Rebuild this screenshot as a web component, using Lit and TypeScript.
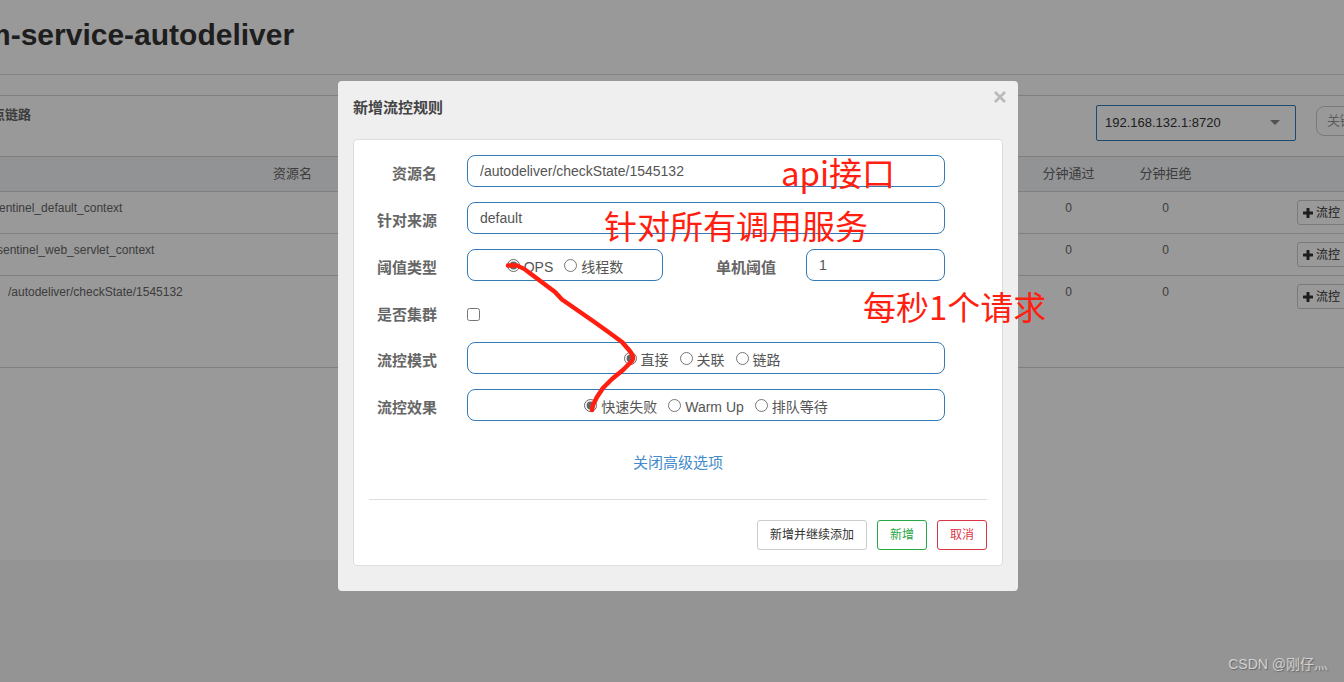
import { LitElement, html, css, svg } from "lit";
import { customElement } from "lit/decorators.js";

const NODES = [
  { name: "sentinel_default_context", level: 0, passed: 0, blocked: 0 },
  { name: "sentinel_web_servlet_context", level: 1, passed: 0, blocked: 0 },
  { name: "/autodeliver/checkState/1545132", level: 2, passed: 0, blocked: 0 },
];

const plusIcon = svg`<svg class="plus" viewBox="0 0 10 10" aria-hidden="true"><path d="M4 0h2q.5 0 .5.5v3h3q.5 0 .5.5v2q0 .5-.5.5h-3v3q0 .5-.5.5H4q-.5 0-.5-.5v-3h-3Q0 6.500 0 6V4q0-.5.5-.5h3v-3Q3.500 0 4 0z" fill="#333"/></svg>`;

/** Monitoring page that lies behind the dialog. */
@customElement("cluster-page")
class ClusterPage extends LitElement {
  static styles = css`
    :host {
      display: block;
      overflow: hidden;
      min-height: 100vh;
      background: #f7f7f7;
      color: #666;
    }
    .bleed {
      margin: 0 -111px 0 -48px;
      padding-bottom: 192px;
      background: #fff;
    }
    h1 {
      margin: 0;
      padding: 18px 32px 22px;
      font-size: 30px;
      line-height: 34px;
      color: #333;
      border-bottom: 1px solid #ddd;
    }
    .card {
      margin-top: 20px;
      padding-bottom: 58px;
      border: 1px solid #d4d4d4;
    }
    .toolbar {
      display: flex;
      align-items: flex-start;
      justify-content: space-between;
      padding: 9px 18px 15px 26px;
    }
    .title {
      font-size: 13px;
      line-height: 20px;
      font-weight: bold;
    }
    .filters {
      display: flex;
      align-items: flex-start;
      gap: 20px;
    }
    .machine {
      position: relative;
    }
    select {
      appearance: none;
      box-sizing: border-box;
      display: block;
      width: 200px;
      height: 36px;
      padding: 0 8px 2px;
      border: 1px solid #337ab7;
      border-radius: 2px;
      background: #fff;
      color: #333;
      font: inherit;
      font-size: 13px;
    }
    .arrow {
      position: absolute;
      right: 16px;
      top: 15px;
      width: 10px;
      height: 5px;
    }
    .keyword {
      box-sizing: border-box;
      width: 120px;
      height: 30px;
      margin-top: 1px;
      padding: 0 10px 2px;
      border: 1px solid #ccc;
      border-radius: 8px;
      background: #fff;
      font: inherit;
      font-size: 13px;
    }
    .keyword::placeholder {
      color: #999;
    }
    table {
      width: 100%;
      table-layout: fixed;
      border-collapse: collapse;
      font-size: 12px;
      line-height: 16px;
    }
    th {
      height: 34px;
      padding: 0;
      border-top: 1px solid #d4d4d4;
      background: #f3f5f7;
      font-size: 13px;
      font-weight: normal;
    }
    td {
      height: 25px;
      padding: 8px 0;
      border-top: 1px solid #d4d4d4;
      text-align: center;
      vertical-align: top;
    }
    tbody tr:last-child td {
      padding-bottom: 0;
    }
    .metric {
      width: 97px;
    }
    .actions {
      width: 240px;
    }
    .name {
      text-align: left;
    }
    .level0 {
      padding-left: 40px;
    }
    .level1 {
      padding-left: 44px;
    }
    .level2 {
      padding-left: 55px;
    }
    .action {
      padding-left: 83px;
      text-align: left;
    }
    .action button {
      display: flex;
      align-items: center;
      gap: 3px;
      height: 25px;
      padding: 0 5px;
      border: 1px solid #ccc;
      border-radius: 3px;
      background: #fff;
      color: #333;
      font: inherit;
    }
    .plus {
      width: 10px;
      height: 10px;
    }
  `;

  render() {
    return html`
      <div class="bleed">
        <h1>m-service-autodeliver</h1>
        <section class="card">
          <div class="toolbar">
            <span class="title">簇点链路</span>
            <div class="filters">
              <div class="machine">
                <select aria-label="IP"><option>192.168.132.1:8720</option></select>
                <svg class="arrow" viewBox="0 0 10 5" aria-hidden="true"><path d="M0 0h10L5 5z" fill="#888" /></svg>
              </div>
              <input class="keyword" type="text" placeholder="关键字" aria-label="关键字" />
            </div>
          </div>
          <table>
            <thead>
              <tr>
                <th>资源名</th>
                <th class="metric"></th>
                <th class="metric"></th>
                <th class="metric"></th>
                <th class="metric"></th>
                <th class="metric">分钟通过</th>
                <th class="metric">分钟拒绝</th>
                <th class="actions"></th>
              </tr>
            </thead>
            <tbody>
              ${NODES.map(
                (n) => html`<tr>
                  <td class="name level${n.level}">${n.name}</td>
                  <td></td>
                  <td></td>
                  <td></td>
                  <td></td>
                  <td>${n.passed}</td>
                  <td>${n.blocked}</td>
                  <td class="action"><button type="button">${plusIcon}流控</button></td>
                </tr>`
              )}
            </tbody>
          </table>
        </section>
      </div>
    `;
  }
}

/** Dialog for a new flow rule. */
@customElement("rule-dialog")
class RuleDialog extends LitElement {
  static styles = css`
    :host {
      display: block;
      box-sizing: border-box;
      width: 680px;
      padding: 15px 15px 25px;
      border-radius: 4px;
      background: #efefef;
      color: #555;
      font-size: 14px;
    }
    header {
      display: flex;
      align-items: flex-start;
      justify-content: space-between;
      padding-bottom: 19px;
    }
    h2 {
      margin: 0;
      font-size: 15px;
      line-height: 24px;
      color: #444;
    }
    .close {
      display: flex;
      margin: -6px -4px 0 0;
      padding: 0;
      border: 0;
      background: none;
    }
    .close svg {
      width: 14px;
      height: 14px;
    }
    .panel {
      padding: 15px;
      border: 1px solid #ddd;
      border-radius: 4px;
      background: #fff;
    }
    .form {
      display: grid;
      grid-template-columns: 68px 196fr 83px 139fr;
      gap: 15px 30px;
      padding-right: 42px;
    }
    .label {
      font-size: 15px;
      line-height: 22px;
      padding-top: 8px;
      font-weight: bold;
      color: #666;
      text-align: right;
    }
    .wide {
      grid-column: 2 / -1;
    }
    .box {
      box-sizing: border-box;
      width: 100%;
      min-width: 0;
      height: 32px;
      margin: 0;
      padding: 0 12px;
      border: 1px solid #337ab7;
      border-radius: 8px;
      background: #fff;
      color: #555;
      font: inherit;
    }
    .choices {
      display: flex;
      align-items: center;
      justify-content: center;
      gap: 11px;
    }
    .choices.spaced {
      padding-right: 20px;
    }
    .choices label {
      display: flex;
      align-items: flex-start;
      gap: 4px;
      line-height: 20px;
      padding-top: 4px;
    }
    input[type="radio"] {
      width: 13px;
      height: 13px;
      margin: 2px 0 0;
      accent-color: #666;
    }
    input[type="checkbox"] {
      width: 13px;
      height: 13px;
      margin: 12px 0 6px;
      justify-self: start;
    }
    .more {
      display: block;
      margin-top: 31px;
      font-size: 15px;
      line-height: 22px;
      text-align: center;
      color: #428bca;
      text-decoration: none;
    }
    footer {
      display: flex;
      justify-content: flex-end;
      gap: 10px;
      margin-top: 25px;
      padding-top: 20px;
      border-top: 1px solid #ddd;
    }
    footer button {
      height: 30px;
      padding: 0 12px 3px;
      border: 1px solid #ccc;
      border-radius: 3px;
      background: #fff;
      color: #333;
      font: inherit;
      font-size: 12px;
    }
    footer .ok {
      border-color: #28a745;
      color: #28a745;
    }
    footer .cancel {
      border-color: #dc3545;
      color: #dc3545;
    }
  `;

  private choices(group: string, labels: string[]) {
    return labels.map(
      (text, i) => html`<label><input type="radio" name=${group} .checked=${i === 0} />${text}</label>`
    );
  }

  render() {
    return html`
      <header>
        <h2>新增流控规则</h2>
        <button class="close" type="button" aria-label="关闭">
          <svg viewBox="0 0 14 14" aria-hidden="true"><path d="M2 2l10 10M12 2l-10 10" stroke="#b9b9b9" stroke-width="2.600" /></svg>
        </button>
      </header>
      <form class="panel" @submit=${(e: Event) => e.preventDefault()}>
        <div class="form">
          <label class="label" for="resource">资源名</label>
          <input class="box wide" id="resource" type="text" value="/autodeliver/checkState/1545132" />
          <label class="label" for="origin">针对来源</label>
          <input class="box wide" id="origin" type="text" value="default" />
          <span class="label" id="grade">阈值类型</span>
          <div class="box choices" role="radiogroup" aria-labelledby="grade">${this.choices("grade", ["QPS", "线程数"])}</div>
          <label class="label" for="count">单机阈值</label>
          <input class="box" id="count" type="text" value="1" />
          <label class="label" for="cluster">是否集群</label>
          <input class="wide" id="cluster" type="checkbox" />
          <span class="label" id="mode">流控模式</span>
          <div class="box wide choices spaced" role="radiogroup" aria-labelledby="mode">${this.choices("mode", ["直接", "关联", "链路"])}</div>
          <span class="label" id="effect">流控效果</span>
          <div class="box wide choices" role="radiogroup" aria-labelledby="effect">${this.choices("effect", ["快速失败", "Warm Up", "排队等待"])}</div>
        </div>
        <a class="more" href="#">关闭高级选项</a>
        <footer>
          <button type="button">新增并继续添加</button>
          <button class="ok" type="submit">新增</button>
          <button class="cancel" type="button">取消</button>
        </footer>
      </form>
    `;
  }
}

@customElement("app-root")
class AppRoot extends LitElement {
  static styles = css`
    :host {
      display: block;
      position: relative;
      overflow: hidden;
      font-family: "Liberation Sans", "Noto Sans CJK SC", sans-serif;
    }
    .overlay {
      position: absolute;
      inset: 0;
      display: flex;
      align-items: flex-start;
      justify-content: center;
      padding: 81px 0 0 12px;
      background: rgba(0, 0, 0, 0.4);
    }
    .sheet {
      position: relative;
    }
    .note {
      position: absolute;
      color: #ff1e10;
      font-family: "Noto Sans CJK SC", sans-serif;
      font-size: 33px;
      line-height: 40px;
      white-space: nowrap;
    }
    .note.api {
      left: 443px;
      top: 71px;
    }
    .note.origin {
      left: 266px;
      top: 124px;
    }
    .note.rate {
      left: 525px;
      top: 205px;
    }
    .stroke {
      position: absolute;
      left: 160px;
      top: 170px;
      width: 150px;
      height: 170px;
      pointer-events: none;
    }
    .watermark {
      position: absolute;
      right: 16px;
      bottom: 8px;
      font-size: 14px;
      line-height: 20px;
      color: #d2d2d2;
      text-shadow: 1px 1px 1px #666;
    }
  `;

  render() {
    return html`
      <cluster-page></cluster-page>
      <div class="overlay">
        <div class="sheet">
          <rule-dialog></rule-dialog>
          <svg class="stroke" viewBox="498 251 150 170" aria-hidden="true">
            <path
              d="M508 265.500H517Q524 268 531 274L555 292L562 299.500L593 321L607 331L622 342L629 350Q635 357 632 361L623 370L612 379L603 388L597 397L593 405L592 410"
              fill="none" stroke="#ff1e10" stroke-width="4.500" stroke-linecap="round" stroke-linejoin="round" />
          </svg>
          <span class="note api">api接口</span>
          <span class="note origin">针对所有调用服务</span>
          <span class="note rate">每秒1个请求</span>
        </div>
      </div>
      <span class="watermark">CSDN @刚仔灬</span>
    `;
  }
}
